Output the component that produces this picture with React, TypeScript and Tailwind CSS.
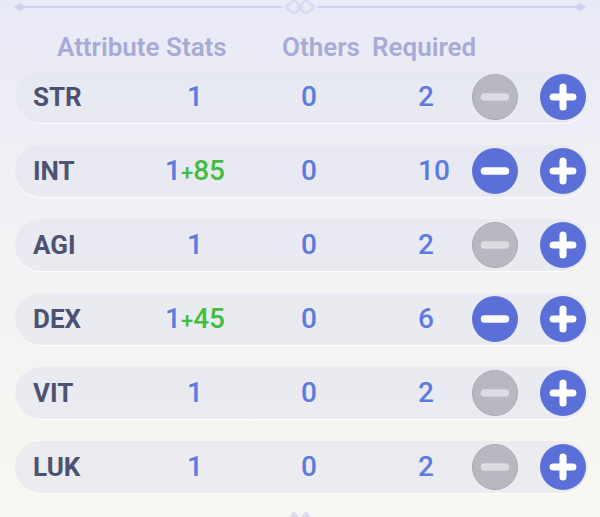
import { Minus, Plus } from 'lucide-react';

interface Stat {
  name: string;
  base: number;
  bonus?: number;
  others: number;
  required: number;
}

const stats: Stat[] = [
  { name: 'STR', base: 1, others: 0, required: 2 },
  { name: 'INT', base: 1, bonus: 85, others: 0, required: 10 },
  { name: 'AGI', base: 1, others: 0, required: 2 },
  { name: 'DEX', base: 1, bonus: 45, others: 0, required: 6 },
  { name: 'VIT', base: 1, others: 0, required: 2 },
  { name: 'LUK', base: 1, others: 0, required: 2 },
];

function Divider() {
  return (
    <svg width="600" height="14" viewBox="0 0 600 14" className="block">
      <line x1="20" y1="7" x2="282" y2="7" stroke="#cfd2ee" strokeWidth="2" />
      <line x1="318" y1="7" x2="582" y2="7" stroke="#cfd2ee" strokeWidth="2" />
      <path d="M14 7 L20 3 L26 7 L20 11 Z" fill="#cfd2ee" />
      <path d="M574 7 L580 3 L586 7 L580 11 Z" fill="#cfd2ee" />
      <path d="M286 7 L294 0 L302 7 L294 14 Z" fill="none" stroke="#d8daf2" strokeWidth="2.5" />
      <path d="M298 7 L306 0 L314 7 L306 14 Z" fill="none" stroke="#d8daf2" strokeWidth="2.5" />
    </svg>
  );
}

function Row({ stat }: { stat: Stat }) {
  const canLower = stat.bonus !== undefined;
  return (
    <div className="flex h-[52px] w-[573px] items-center rounded-full bg-[#e6e7f0]/70 pl-[18px] shadow-[0_1px_0_rgba(255,255,255,0.9)]">
      <div className="w-[110px] text-[26px] font-bold text-[#4d5273]">{stat.name}</div>
      <div className="w-[104px] text-center text-[28px] font-medium">
        <span className="text-[#5d7ae0]">{stat.base}</span>
        {stat.bonus !== undefined && (
          <span className="text-[#43bd3f]">
            <span className="text-[22px]">+</span>
            {stat.bonus}
          </span>
        )}
      </div>
      <div className="w-[124px] text-center text-[28px] font-medium text-[#5d7ae0]">{stat.others}</div>
      <div className="w-[101px] pl-[47px] text-[28px] font-medium text-[#5d7ae0]">{stat.required}</div>
      <button
        className={`flex h-[46px] w-[46px] items-center justify-center rounded-full ${
          canLower ? 'bg-[#5a6fd8]' : 'border border-[#a9a9b2] bg-[#b8b8c0]'
        }`}
      >
        <Minus size={36} strokeWidth={5} color={canLower ? '#ffffff' : '#dcdce2'} />
      </button>
      <button className="ml-[22px] flex h-[46px] w-[46px] items-center justify-center rounded-full bg-[#5a6fd8]">
        <Plus size={34} strokeWidth={5} color="#ffffff" />
      </button>
    </div>
  );
}

export default function App() {
  return (
    <div
      className="h-[517px] w-[600px] overflow-hidden bg-gradient-to-b from-[#e9eaf7] via-[#f3f2f4] to-[#f9f7f1]"
      style={{ fontFamily: 'Roboto, "Noto Sans", sans-serif' }}
    >
      <Divider />
      <div className="mt-[18px] flex h-[30px] items-center text-[26px] font-semibold text-[#a8abd6]">
        <span className="ml-[57px] w-[225px]">Attribute Stats</span>
        <span className="w-[90px]">Others</span>
        <span>Required</span>
      </div>
      <div className="mt-[9px] flex flex-col gap-[22px] pl-[15px]">
        {stats.map((s) => (
          <Row key={s.name} stat={s} />
        ))}
      </div>
      <div className="mt-[14px] flex justify-center">
        <svg width="30" height="10" viewBox="0 0 30 10">
          <path d="M4 10 L9 4 L14 10 Z" fill="#dcdcf0" />
          <path d="M16 10 L21 4 L26 10 Z" fill="#dcdcf0" />
        </svg>
      </div>
    </div>
  );
}
